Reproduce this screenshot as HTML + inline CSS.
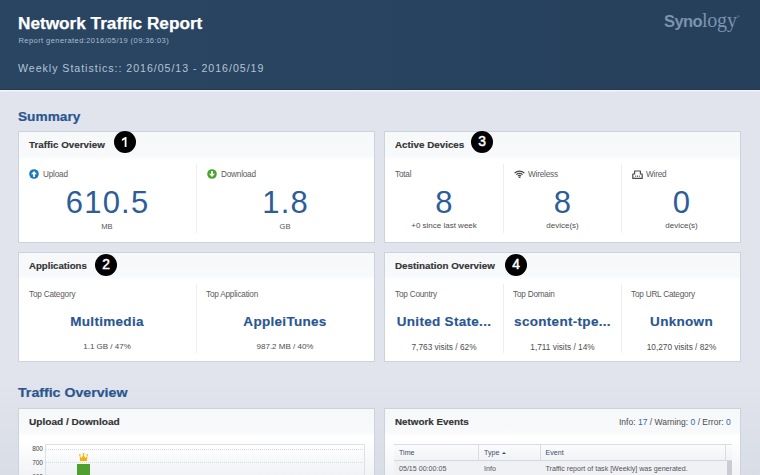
<!DOCTYPE html>
<html><head><meta charset="utf-8">
<style>
*{box-sizing:border-box;margin:0;padding:0}
html,body{width:760px;height:475px;overflow:hidden}
body{position:relative;background:linear-gradient(#e1e4ec 0,#e1e4ec 380px,#d9dde5 475px);font-family:"Liberation Sans",sans-serif;color:#333}
.a{position:absolute;white-space:nowrap;line-height:1}
.sx{display:inline-block;transform-origin:0 0}
.c{text-align:center}
#hdr{position:absolute;left:0;top:0;width:760px;height:90px;background:linear-gradient(90deg,#2a4562 0%,#284460 45%,#263f5b 100%)}
#hdrdark{position:absolute;left:0;top:89px;width:760px;height:1px;background:#233954}
#hdrline{position:absolute;left:0;top:90px;width:760px;height:1px;background:#f3f5f8}
#hdrline2{position:absolute;left:0;top:91px;width:760px;height:1px;background:#e8ebf0}
.card{position:absolute;background:#fff;border:1px solid #cdd3db}
.ch{position:absolute;left:0;top:0;right:0;height:27px;background:linear-gradient(#f6f8fa,#f7f9fb 85%,#fbfcfd)}
.ct{font-size:9px;font-weight:700;color:#333;-webkit-text-stroke:0.15px #333}
.h2{font-size:12px;font-weight:700;color:#2a5690;-webkit-text-stroke:0.2px #2a5690}
.badge{position:absolute;width:22px;height:22px;border-radius:50%;background:#000;color:#fff;font-weight:400;font-size:13.8px;text-align:center;line-height:22px;-webkit-text-stroke:0.5px #fff}
.dv{position:absolute;width:1px;background:#eceef2}
.lbl{font-size:8.2px;letter-spacing:-0.2px;color:#5a5a5a}
.big{font-size:31px;color:#2d5d99;letter-spacing:1.2px;text-indent:1.2px}
.unit{font-size:7.6px;color:#555}
.bigb{font-size:13.5px;font-weight:700;color:#2a5690;letter-spacing:0.3px;-webkit-text-stroke:0.15px #2a5690}
.sm{font-size:8px;color:#4d4d4d}
.tb{font-size:7.1px}
</style></head><body>
<div id="hdr"></div>
<div id="hdrdark"></div>
<div id="hdrline"></div>
<div id="hdrline2"></div>
<div class="a" style="left:18px;top:15px;font-size:17.2px;font-weight:700;color:#fff;-webkit-text-stroke:0.25px #fff">Network Traffic Report</div>
<div class="a" style="left:18.5px;top:36.8px;font-size:7.5px;letter-spacing:0.43px;color:#a9bccf">Report generated:2016/05/19 (09:36:03)</div>
<div class="a" style="left:18px;top:62.5px;font-size:10.6px;letter-spacing:0.98px;color:#b3c3d4">Weekly Statistics:: 2016/05/13 - 2016/05/19</div>
<div class="a" style="left:664px;top:9.5px;color:#7b93ad;font-size:16.5px"><b style="letter-spacing:-0.6px">Syno</b><span style="font-family:'Liberation Serif',serif;font-size:20px;letter-spacing:-0.2px">logy</span><span style="font-size:4px;position:relative;top:-9px">&#174;</span></div>

<div class="a h2" style="left:18px;top:111px"><span class="sx" style="transform:scaleX(1.14)">Summary</span></div>

<!-- cards -->
<div class="card" style="left:18px;top:131px;width:357px;height:112px"><div class="ch"></div></div>
<div class="card" style="left:384px;top:131px;width:357px;height:112px"><div class="ch"></div></div>
<div class="card" style="left:18px;top:252px;width:357px;height:110px"><div class="ch" style="height:26px"></div></div>
<div class="card" style="left:384px;top:252px;width:357px;height:110px"><div class="ch" style="height:26px"></div></div>
<div class="card" style="left:18px;top:408px;width:357px;height:80px;background:linear-gradient(#fff 30px,#f2f3f6 67px)"><div class="ch" style="height:26px"></div></div>
<div class="card" style="left:384px;top:408px;width:357px;height:80px;background:linear-gradient(#fff 30px,#f2f3f6 67px)"><div class="ch" style="height:26px"></div></div>

<!-- Traffic Overview card -->
<div class="a ct" style="left:29px;top:141px"><span class="sx" style="transform:scaleX(1.09)">Traffic Overview</span></div>
<div class="badge" style="left:114px;top:131px"><svg width="22" height="22" viewBox="0 0 22 22" style="position:absolute;left:0;top:0"><path d="M7.9 8 L11.2 6 H12.5 V16.1 H10.7 V8.6 L7.9 9.9 Z" fill="#fff"/></svg></div>
<div class="dv" style="left:196px;top:164px;height:69px"></div>
<svg class="a" style="left:29px;top:169px" width="10" height="10" viewBox="0 0 10 10"><circle cx="5" cy="5" r="4.8" fill="#1877c0"/><path d="M5 2 L8 5.2 H5.9 V8 H4.1 V5.2 H2 Z" fill="#fff"/></svg>
<div class="a lbl" style="left:43px;top:170.8px">Upload</div>
<div class="a big c" style="left:18px;width:178px;top:186.5px">610.5</div>
<div class="a unit c" style="left:18px;width:178px;top:222.5px">MB</div>
<svg class="a" style="left:207px;top:169px" width="10" height="10" viewBox="0 0 10 10"><circle cx="5" cy="5" r="4.8" fill="#48a52a"/><path d="M5 8 L8 4.8 H5.9 V2 H4.1 V4.8 H2 Z" fill="#fff"/></svg>
<div class="a lbl" style="left:221px;top:170.8px">Download</div>
<div class="a big c" style="left:196px;width:178px;top:186.5px">1.8</div>
<div class="a unit c" style="left:196px;width:178px;top:222.5px">GB</div>

<!-- Active Devices card -->
<div class="a ct" style="left:395px;top:141px"><span class="sx" style="transform:scaleX(1.09)">Active Devices</span></div>
<div class="badge" style="left:471px;top:131px">3</div>
<div class="dv" style="left:503px;top:164px;height:69px"></div>
<div class="dv" style="left:621px;top:164px;height:69px"></div>
<div class="a lbl" style="left:395px;top:170.8px">Total</div>
<div class="a big c" style="left:385px;width:118px;top:186.5px">8</div>
<div class="a sm c" style="left:385px;width:118px;top:222px">+0 since last week</div>
<svg class="a" style="left:513.5px;top:169.7px" width="11" height="8.3" viewBox="0 0 11 8.3"><path d="M0.6 3 Q5.5 -0.9 10.4 3" stroke="#474747" stroke-width="1.2" fill="none"/><path d="M2.3 4.6 Q5.5 2 8.7 4.6" stroke="#474747" stroke-width="1.2" fill="none"/><path d="M3.9 6 Q5.5 4.8 7.1 6" stroke="#474747" stroke-width="1.1" fill="none"/><rect x="4.7" y="6.6" width="1.7" height="1.7" fill="#474747"/></svg>
<div class="a lbl" style="left:528px;top:170.8px">Wireless</div>
<div class="a big c" style="left:503px;width:119px;top:186.5px">8</div>
<div class="a sm c" style="left:503px;width:119px;top:222px">device(s)</div>
<svg class="a" style="left:632px;top:169.5px" width="11" height="9" viewBox="0 0 11 9"><path d="M0.8 8.4 V4 H2.6 V1 H8.4 V4 H10.2 V8.4 Z" stroke="#4a4a4a" stroke-width="1.2" fill="none" stroke-linejoin="round"/><rect x="3.2" y="5.6" width="1" height="1.2" fill="#4a4a4a"/><rect x="5" y="5.6" width="1" height="1.2" fill="#4a4a4a"/><rect x="6.8" y="5.6" width="1" height="1.2" fill="#4a4a4a"/></svg>
<div class="a lbl" style="left:646px;top:170.8px">Wired</div>
<div class="a big c" style="left:622px;width:119px;top:186.5px">0</div>
<div class="a sm c" style="left:622px;width:119px;top:222px">device(s)</div>

<!-- Applications card -->
<div class="a ct" style="left:29px;top:261.5px"><span class="sx" style="transform:scaleX(1.07)">Applications</span></div>
<div class="badge" style="left:95px;top:254px">2</div>
<div class="dv" style="left:196px;top:284px;height:69px"></div>
<div class="a lbl" style="left:29px;top:290.8px">Top Category</div>
<div class="a bigb c" style="left:18px;width:178px;top:315px">Multimedia</div>
<div class="a sm c" style="left:18px;width:178px;top:342.5px">1.1 GB / 47%</div>
<div class="a lbl" style="left:206px;top:290.8px">Top Application</div>
<div class="a bigb c" style="left:196px;width:178px;top:315px">AppleiTunes</div>
<div class="a sm c" style="left:196px;width:178px;top:342.5px">987.2 MB / 40%</div>

<!-- Destination Overview card -->
<div class="a ct" style="left:395px;top:261.5px"><span class="sx" style="transform:scaleX(1.09)">Destination Overview</span></div>
<div class="badge" style="left:505px;top:254px">4</div>
<div class="dv" style="left:503px;top:284px;height:69px"></div>
<div class="dv" style="left:621px;top:284px;height:69px"></div>
<div class="a lbl" style="left:395px;top:290.8px">Top Country</div>
<div class="a bigb c" style="left:385px;width:118px;top:315px">United State...</div>
<div class="a sm c" style="left:385px;width:118px;top:342.8px;font-size:8.3px">7,763 visits / 62%</div>
<div class="a lbl" style="left:513px;top:290.8px">Top Domain</div>
<div class="a bigb c" style="left:503px;width:119px;top:315px">scontent-tpe...</div>
<div class="a sm c" style="left:503px;width:119px;top:342.8px;font-size:8.3px">1,711 visits / 14%</div>
<div class="a lbl" style="left:631px;top:290.8px">Top URL Category</div>
<div class="a bigb c" style="left:622px;width:119px;top:315px">Unknown</div>
<div class="a sm c" style="left:622px;width:119px;top:342.8px;font-size:8.3px">10,270 visits / 82%</div>

<div class="a h2" style="left:18px;top:387px"><span class="sx" style="transform:scaleX(1.18)">Traffic Overview</span></div>

<!-- Upload / Download -->
<div class="a ct" style="left:28.5px;top:417.5px"><span class="sx" style="transform:scaleX(1.12)">Upload / Download</span></div>

<!-- Network Events -->
<div class="a ct" style="left:395px;top:417.5px"><span class="sx" style="transform:scaleX(1.09)">Network Events</span></div>
<div class="a sm" style="left:619px;top:418px;font-size:8.5px">Info: <span style="color:#2e6aa8">17</span> / Warning: <span style="color:#2e6aa8">0</span> / Error: <span style="color:#2e6aa8">0</span></div>

<!-- chart -->
<div class="a" style="left:45px;top:444px;width:320px;height:40px;border:1px solid #dde0e5;background:linear-gradient(#fff,#f0f2f5 30px)"></div>
<div class="a" style="left:46px;top:449px;width:318px;height:1px;background:repeating-linear-gradient(90deg,#d6d9de 0 1px,transparent 1px 2px)"></div>
<div class="a" style="left:46px;top:462px;width:318px;height:1px;background:repeating-linear-gradient(90deg,#d6d9de 0 1px,transparent 1px 2px)"></div>
<div class="a" style="left:46px;top:476px;width:318px;height:1px;background:repeating-linear-gradient(90deg,#d6d9de 0 1px,transparent 1px 2px)"></div>
<div class="a" style="left:27px;width:16px;top:445.5px;font-size:6.5px;color:#444;text-align:right">800</div>
<div class="a" style="left:27px;width:16px;top:460.3px;font-size:6.5px;color:#444;text-align:right">700</div>
<div class="a" style="left:27px;width:16px;top:474px;font-size:6.5px;color:#444;text-align:right">600</div>
<div class="a" style="left:77px;top:463.5px;width:13px;height:15px;background:#4f9f30"></div>
<svg class="a" style="left:78.5px;top:453px" width="9" height="8" viewBox="0 0 9 8"><path d="M0.7 2.6 L2.6 4.9 L4.5 1.6 L6.4 4.9 L8.3 2.6 L8 7.9 H1 Z" fill="#f3b20b"/><circle cx="0.8" cy="1.9" r="0.85" fill="#f3b20b"/><circle cx="4.5" cy="1" r="0.9" fill="#f3b20b"/><circle cx="8.2" cy="1.9" r="0.85" fill="#f3b20b"/></svg>

<!-- table -->
<div class="a" style="left:394px;top:444px;width:338px;height:17px;border-top:1px solid #dadde2;border-bottom:1px solid #d5d8de;background:linear-gradient(#fafbfc,#f1f3f5)"></div>
<div class="a" style="left:478px;top:445px;width:1px;height:15px;background:#d9dce1"></div>
<div class="a" style="left:540px;top:445px;width:1px;height:15px;background:#d9dce1"></div>
<div class="a" style="left:725px;top:445px;width:1px;height:15px;background:#d9dce1"></div>
<div class="a" style="left:394px;top:461px;width:333px;height:14px;background:#eff1f4"></div>
<div class="a" style="left:727px;top:461px;width:5px;height:14px;background:#c9cdd3"></div>
<div class="a tb" style="left:399px;top:450px;color:#3d4d6c">Time</div>
<div class="a tb" style="left:484px;top:450px;color:#3d4d6c">Type<span style="display:inline-block;width:0;height:0;border-left:2.5px solid transparent;border-right:2.5px solid transparent;border-bottom:2.5px solid #3b4a66;margin-left:3px;position:relative;top:-1.5px"></span></div>
<div class="a tb" style="left:545.5px;top:450px;color:#3d4d6c">Event</div>
<div class="a tb" style="left:399px;top:466px;color:#555">05/15 00:00:05</div>
<div class="a tb" style="left:484px;top:466px;color:#555">Info</div>
<div class="a tb" style="left:545.5px;top:466px;color:#555">Traffic report of task [Weekly] was generated.</div>


</body></html>
